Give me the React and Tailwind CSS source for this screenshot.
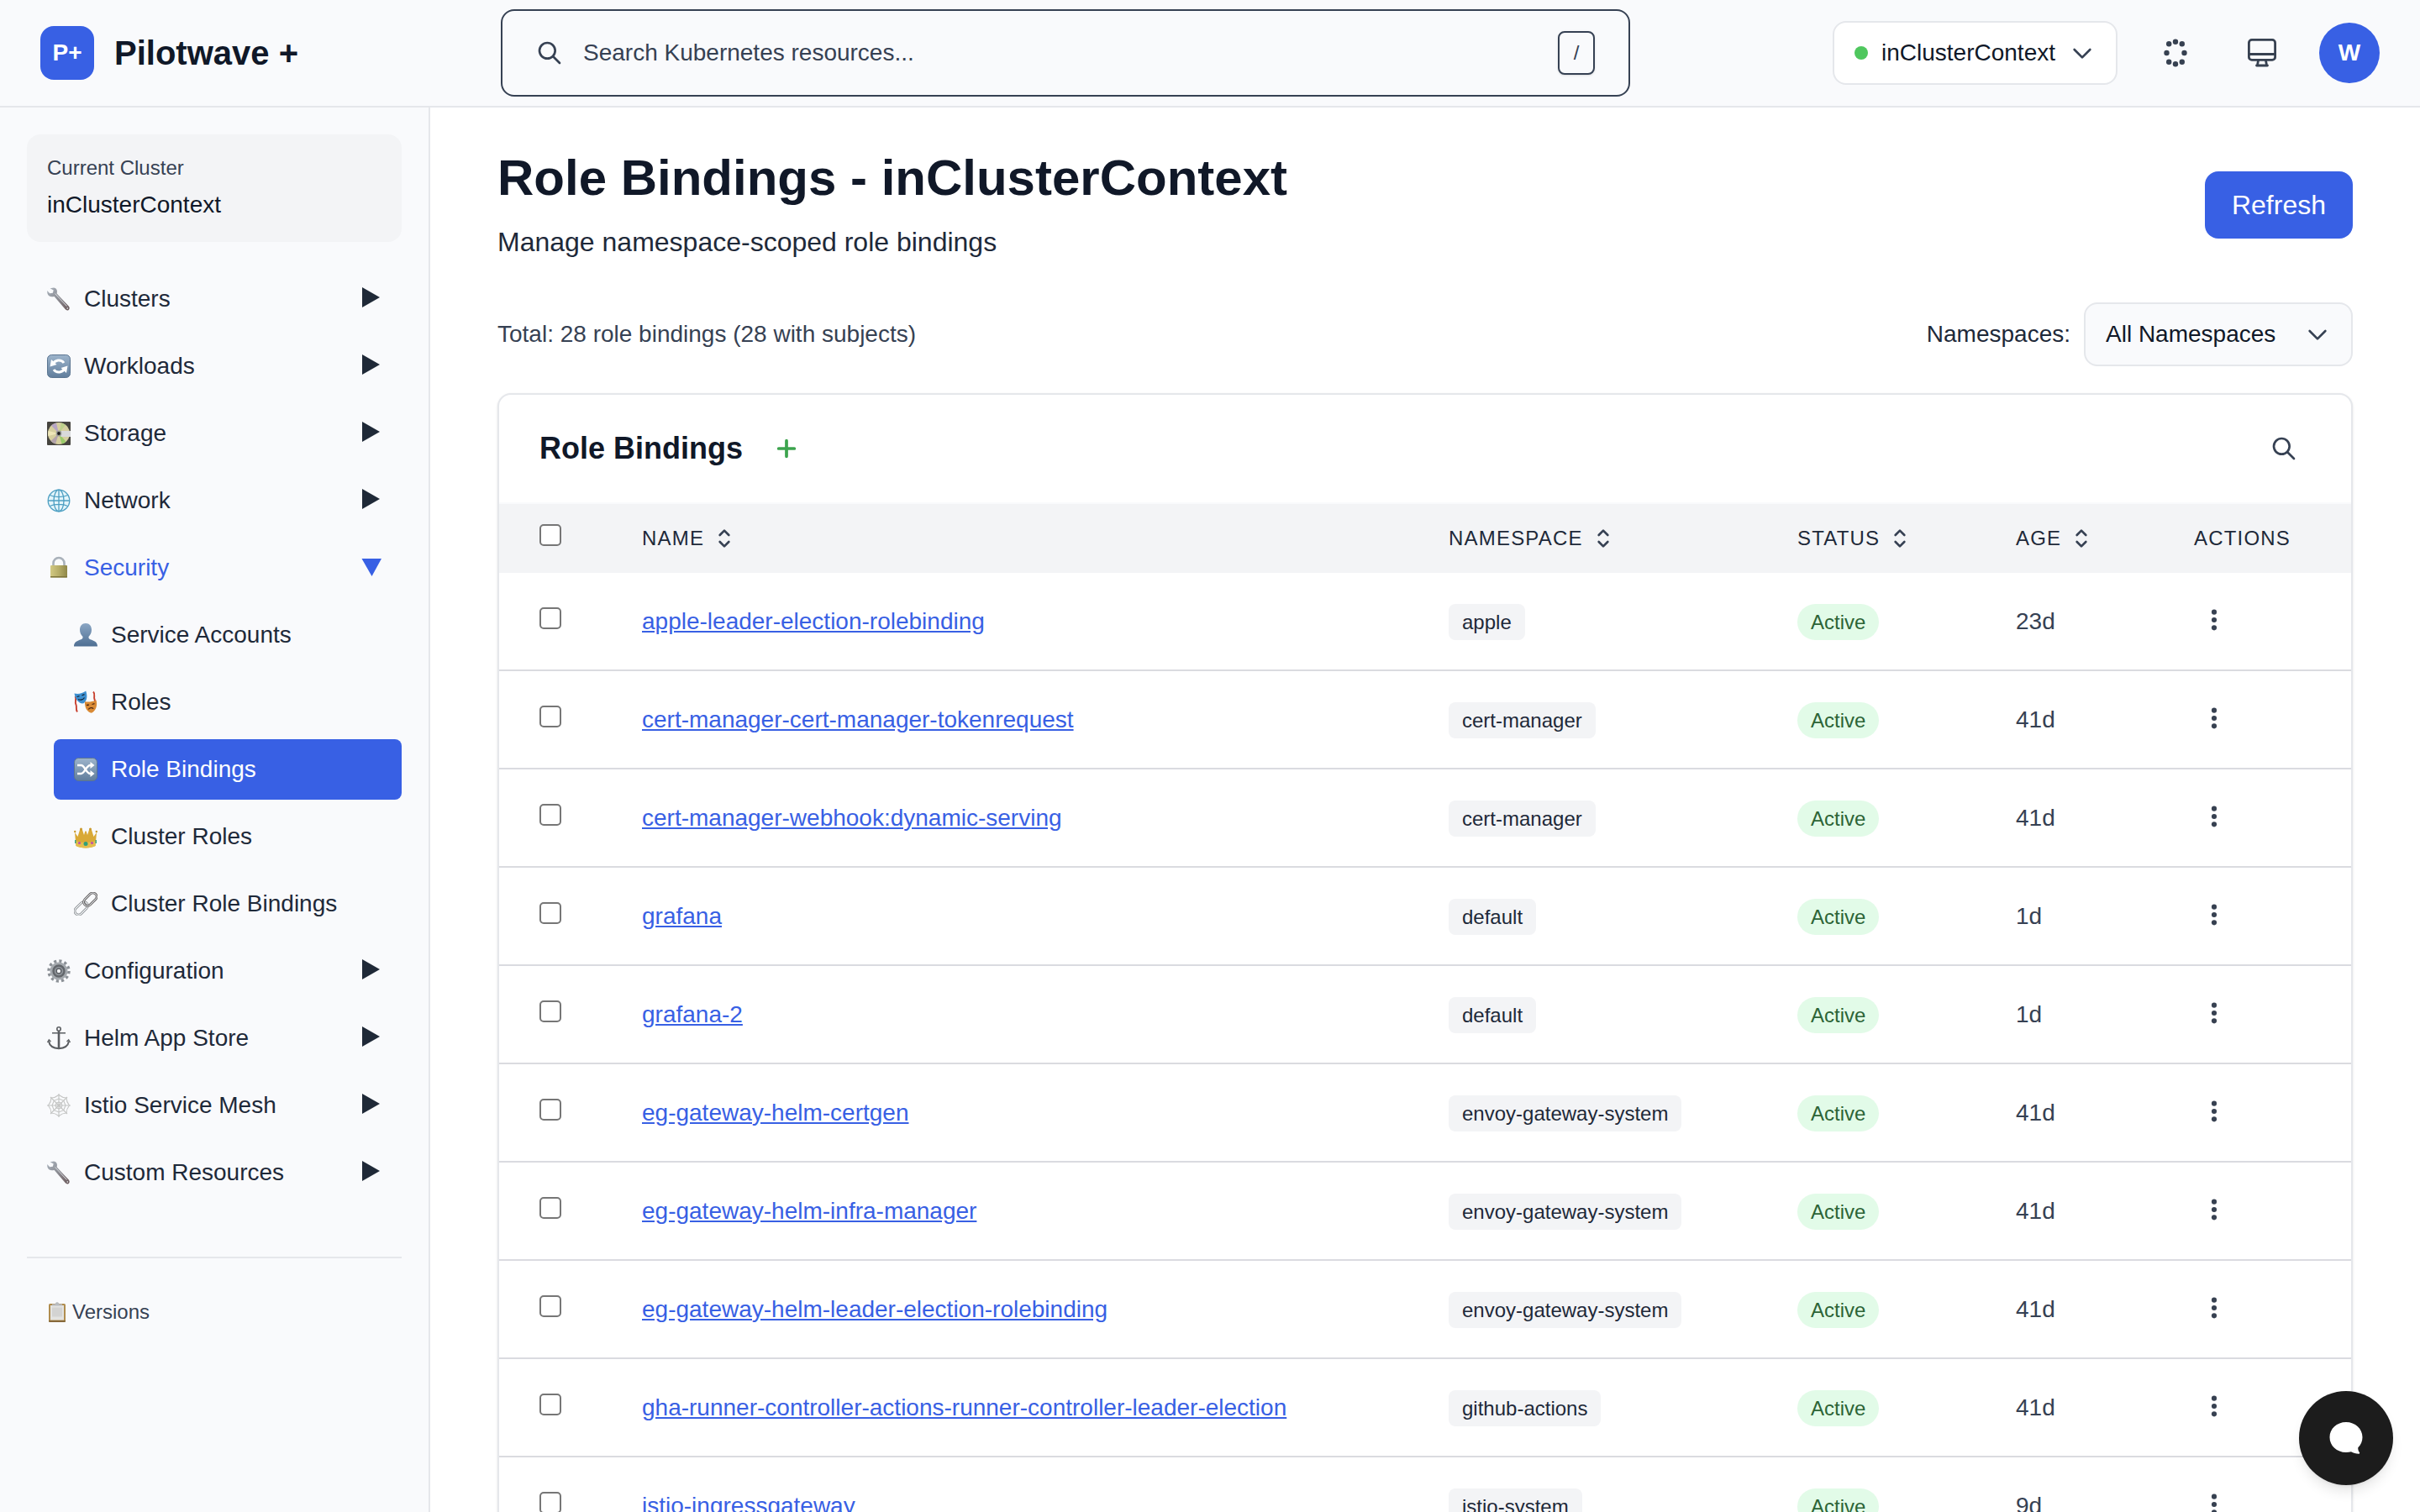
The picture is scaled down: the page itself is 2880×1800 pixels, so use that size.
import React from "react";

const WrenchIcon = () => (
  <svg viewBox="0 0 28 28" className="size-7" aria-hidden="true">
    <defs>
      <linearGradient id="steel" x1="0" y1="0" x2="1" y2="1">
        <stop offset="0" stopColor="#aab3bd" />
        <stop offset="0.45" stopColor="#8d8f96" />
        <stop offset="1" stopColor="#6e5a5c" />
      </linearGradient>
    </defs>
    <path
      d="M3.6 1.2 8 .6c2.6.2 4.4 2.600 3.900 5.200l-.3 1.800 14.200 14.900c1.300 1.400 1.200 3.400-.1 4.400-1.200.9-2.900.7-3.900-.6L8.600 10.900l-1.900.3C3.900 11.600 1.100 10 .4 7.200L.1 4l3.100 3.300 3.600-.6.9-3.100z"
      fill="url(#steel)"
    />
    <path d="m9.500 7.500 14 15" stroke="#d9dde1" strokeWidth="1" />
    <circle cx="24.200" cy="25" r="1.300" fill="#f3f4f6" stroke="#54484a" strokeWidth=".8" />
  </svg>
);

const TileDefs = () => (
  <defs>
    <linearGradient id="tile" x1="0" y1="0" x2="0" y2="1">
      <stop offset="0" stopColor="#9db4cb" />
      <stop offset="1" stopColor="#607d9c" />
    </linearGradient>
  </defs>
);

const CycleIcon = () => (
  <svg viewBox="0 0 28 28" className="size-7" aria-hidden="true">
    <TileDefs />
    <rect x=".5" y=".5" width="27" height="27" rx="5" fill="url(#tile)" stroke="#5b7591" />
    <g fill="none" stroke="#fff" strokeWidth="3">
      <path d="M7 11.500c2-5 9.500-6.500 13-1.500" />
      <path d="M21 16.500c-2 5-9.500 6.500-13 1.500" />
    </g>
    <path d="m3.500 14.500 1.500-8.500 6.500 6zM24.500 13.500 23 22l-6.500-6z" fill="#fff" />
  </svg>
);

const DiscIcon = () => (
  <svg viewBox="0 0 28 28" className="size-7" aria-hidden="true">
    <rect width="28" height="28" rx="1" fill="#46443f" />
    <circle cx="14" cy="14" r="13" fill="#d6cf9f" />
    <path d="M14 14 5 4.600A13 13 0 0 1 11 1.400z" fill="#b7a5c4" />
    <path d="m14 14 3-12.600a13 13 0 0 1 5 2.500z" fill="#bcd08a" />
    <path d="m14 14 8.500 9.800a13 13 0 0 1-5 2.700z" fill="#9acb6a" />
    <path d="M14 14 10 26.400A13 13 0 0 1 4.500 23z" fill="#b3a3ab" />
    <path d="M14 14 1.400 17A13 13 0 0 1 1.400 11z" fill="#eee6b8" />
    <path d="M17 11h11v7H17a4 4 0 0 1 0-7z" fill="#d9dadb" />
    <circle cx="14" cy="14" r="3.400" fill="#9b9c98" />
    <circle cx="14" cy="14" r="1.900" fill="#1c1c1c" />
  </svg>
);

const GlobeIcon = () => (
  <svg viewBox="0 0 28 28" className="size-7" fill="none" stroke="#4d9fc2" strokeWidth="1.300" aria-hidden="true">
    <circle cx="14" cy="14" r="12.800" fill="#e4f5fb" />
    <ellipse cx="14" cy="14" rx="6" ry="12.800" />
    <path d="M14 1v26M1 14h26M3.200 7.500c6 2.800 15.600 2.800 21.600 0M3.200 20.500c6-2.800 15.600-2.800 21.600 0" />
  </svg>
);

const LockIcon = () => (
  <svg viewBox="0 0 28 28" className="size-7" aria-hidden="true">
    <defs>
      <linearGradient id="brass" x1="0" x2="1">
        <stop offset="0" stopColor="#d2c983" />
        <stop offset=".5" stopColor="#b6ad68" />
        <stop offset="1" stopColor="#8f8748" />
      </linearGradient>
    </defs>
    <path d="M7.500 13V8.500a6.500 6.500 0 0 1 13 0V13" fill="none" stroke="#a9b1ba" strokeWidth="2.600" />
    <rect x="4" y="11" width="20" height="14.500" rx="1" fill="url(#brass)" />
    <path d="M4 24h20v1.500H4z" fill="#7d743b" />
  </svg>
);

const PersonIcon = () => (
  <svg viewBox="0 0 28 28" className="size-7" aria-hidden="true">
    <defs>
      <linearGradient id="bust" x1="0" y1="0" x2="0" y2="1">
        <stop offset="0" stopColor="#8aa6c4" />
        <stop offset="1" stopColor="#4f6f93" />
      </linearGradient>
    </defs>
    <path
      d="M14 0c4.400 0 7 3.200 7 7.800 0 3.600-1.600 6.400-3.400 8-.4 1.700.2 2.700 1.900 3.400 4.300 1.600 8.500 3 8.500 8.300H0c0-5.300 4.200-6.700 8.500-8.300 1.700-.7 2.300-1.700 1.900-3.400C8.600 14.200 7 11.400 7 7.800 7 3.200 9.600 0 14 0z"
      fill="url(#bust)"
    />
  </svg>
);

const MasksIcon = () => (
  <svg viewBox="0 0 28 28" className="size-7" fill="none" aria-hidden="true">
    <path d="M1.500 7c2 3-1 6 1 10 1.200 3-.8 5 1.500 8.500" stroke="#c8402f" strokeWidth="1.900" />
    <path d="M23 1.500c3 3 0 6 1.500 9 1 2 0 3.500 1 5" stroke="#c8402f" strokeWidth="1.900" />
    <path d="M.5 3.500C5.500 4.500 10 3.500 14.200.5c1.800 5 2 11.500-2.700 14.800C6 16.200 1.500 10.500.5 3.500z" fill="#3e8fd0" />
    <path d="m3.500 7.500 3-.9M9.500 5.800l3-1.200M5 10.500c2.500 1.500 6 .5 7.500-2" stroke="#12283d" strokeWidth="1.300" />
    <path d="M13 13.200c4.500.8 8.800.2 13.500-1.700 1.500 5.500.500 12-5.500 15.300-5.500-1-8.500-7-8-13.600z" fill="#d98a35" />
    <path d="m15 17.500 3-.4M21.500 16.500l3-.9M17.200 22.500c1.500-2.200 4.300-2.500 6-.9" stroke="#4a2410" strokeWidth="1.300" />
  </svg>
);

const ShuffleIcon = () => (
  <svg viewBox="0 0 28 28" className="size-7" aria-hidden="true">
    <TileDefs />
    <rect x=".5" y=".5" width="27" height="27" rx="5" fill="url(#tile)" stroke="#5b7591" />
    <g fill="none" stroke="#fff" strokeWidth="2.400">
      <path d="M4 9h4.500c4.500 0 6 10 11 10h1.500" />
      <path d="M4 19h4.500c4.500 0 6-10 11-10h1.500" />
    </g>
    <path d="m19.500 5 5 4-5 4zM19.500 15l5 4-5 4z" fill="#fff" />
  </svg>
);

const CrownIcon = () => (
  <svg viewBox="0 0 28 28" className="size-7" aria-hidden="true">
    <path
      d="m1 9 3.500 5L7 6l1.500-1L10 6l2 6 1.300-4.500h1.400L16 12l2-6 1.500-1L21 6l2.500 8L27 9l-1.500 16c-5 3.200-18 3.200-23 0z"
      fill="#d9a936"
    />
    <path d="M2 19c6 2.500 18 2.500 24 0l-.5 6c-5 3.200-18 3.200-23 0z" fill="#e5bd4d" />
    <g fill="#c9982b">
      <circle cx="1.200" cy="8" r="1.200" />
      <circle cx="8.500" cy="5" r="1.500" />
      <circle cx="19.500" cy="5" r="1.500" />
      <circle cx="26.800" cy="8" r="1.200" />
    </g>
    <circle cx="14" cy="22.500" r="2.500" fill="#2fa07a" />
    <circle cx="6.500" cy="21.500" r="1.600" fill="#c04fa8" />
    <circle cx="21.500" cy="21.500" r="1.600" fill="#c04fa8" />
    <path d="M1.800 18v4M26.200 18v4" stroke="#3aa57f" strokeWidth="1.500" />
  </svg>
);

const LinkIcon = () => (
  <svg viewBox="0 0 28 28" className="size-7" fill="none" aria-hidden="true">
    <g transform="rotate(-45 14 14)">
      <rect x="-2.500" y="9.500" width="18" height="9" rx="4.500" stroke="#7d8085" strokeWidth="2.800" />
      <rect x="-2.500" y="9.500" width="18" height="9" rx="4.500" stroke="#eceff1" strokeWidth="1.400" />
      <rect x="12.500" y="9.500" width="18" height="9" rx="4.500" stroke="#5a5555" strokeWidth="2.800" />
      <rect x="12.500" y="9.500" width="18" height="9" rx="4.500" stroke="#d8dcdf" strokeWidth="1.200" />
    </g>
  </svg>
);

const GearIcon = () => (
  <svg viewBox="0 0 28 28" className="size-7" fill="none" aria-hidden="true">
    <circle cx="14" cy="14" r="12" stroke="#8b9096" strokeWidth="3.400" strokeDasharray="3.140 3.140" />
    <circle cx="14" cy="14" r="8.500" fill="#8f949a" stroke="#a3a8ad" strokeWidth="4" />
    <circle cx="14" cy="14" r="6.500" stroke="#62666b" strokeWidth="2.400" />
    <circle cx="14" cy="14" r="2.800" fill="#f3f4f6" stroke="#54585d" strokeWidth="1.200" />
  </svg>
);

const AnchorIcon = () => (
  <svg viewBox="0 0 28 28" className="size-7" fill="none" stroke="#5a5d61" aria-hidden="true">
    <circle cx="14" cy="3" r="2.200" strokeWidth="1.600" />
    <path d="M14 5.500V26" strokeWidth="2.600" />
    <path d="M6 7.800h16" strokeWidth="1.500" />
    <path d="M2 17.500C3 23.500 8 26 14 26.300c6-.3 11-2.800 12-8.800" strokeWidth="1.900" />
    <path d="m.5 19 1.800-3.200L4.500 18M27.500 19l-1.800-3.200-2.200 2.200" strokeWidth="1.400" />
  </svg>
);

const WebIcon = () => (
  <svg viewBox="0 0 28 28" className="size-7" fill="none" stroke="#c4c5c4" strokeWidth="1.100" aria-hidden="true">
    <path d="M14 0v28M0 14h28M4 4l20 20M24 4 4 24" />
    <path d="M14 1.500Q18.500 5 23 5q0 4.500 3.500 9-3.500 4.500-3.500 9-4.500 0-9 3.500Q9.500 23 5 23q0-4.500-3.500-9Q5 9.500 5 5q4.500 0 9-3.500z" />
    <path d="m14 6 5.700 2.300L22 14l-2.300 5.700L14 22l-5.700-2.300L6 14l2.300-5.700z" />
    <path d="m14 10 2.800 1.200L18 14l-1.200 2.800L14 18l-2.800-1.200L10 14l1.200-2.800z" />
  </svg>
);

const ClipboardIcon = () => (
  <svg viewBox="0 0 24 24" className="size-6" aria-hidden="true">
    <rect x="2" y="2" width="20" height="22" rx="1.500" fill="#b08d4f" />
    <rect x="4" y="4" width="16" height="17.500" fill="#e3e3e1" />
    <rect x="6" y="6.500" width="12" height="11" fill="#d3d3d2" />
    <path d="M6 4.500V2.500h3.500C10 .8 11 .3 12 .3s2 .5 2.500 2.200H18v2z" fill="#b9bcc0" />
    <path d="M2 22h20v.5a1.500 1.500 0 0 1-1.500 1.500h-17A1.500 1.500 0 0 1 2 22.500z" fill="#86683a" />
  </svg>
);

const Stroke = ({ d, className = "text-gray-700", weight = 2 }) => (
  <svg
    viewBox="0 0 24 24"
    className={`size-8 shrink-0 ${className}`}
    fill="none"
    stroke="currentColor"
    strokeWidth={weight}
    strokeLinecap="round"
    strokeLinejoin="round"
    aria-hidden="true"
  >
    <path d={d} />
  </svg>
);

const SEARCH = "M21 21l-6-6m2-5a7 7 0 11-14 0 7 7 0 0114 0z";
const CHEVRON = "M19 9l-7 7-7-7";
const SORT = "M8 9l4-4 4 4m0 6l-4 4-4-4";

const SyncDots = () => (
  <svg viewBox="0 0 36 36" className="size-9" fill="#374151" aria-hidden="true">
    <circle cx="19" cy="4.700" r="3.200" />
    <circle cx="11.200" cy="7.300" r="3.200" />
    <circle cx="26.800" cy="7.300" r="3.200" />
    <circle cx="8.500" cy="18" r="3.200" />
    <circle cx="29.500" cy="18" r="3.200" />
    <circle cx="11.200" cy="28.700" r="3.200" />
    <circle cx="26.800" cy="28.700" r="3.200" />
    <circle cx="19" cy="31.300" r="3.200" />
  </svg>
);

const Monitor = () => (
  <svg viewBox="0 0 36 36" className="size-9" fill="none" stroke="#374151" strokeWidth="2.800" strokeLinecap="round" strokeLinejoin="round" aria-hidden="true">
    <rect x="2.400" y="2.400" width="31.200" height="24" rx="3.500" />
    <path d="M3 19.500h30M13.500 27l-1 5.500M22.500 27l1 5.500M11.500 33h13" />
  </svg>
);

const Kebab = () => (
  <svg viewBox="0 0 24 24" className="size-8" fill="#374151" aria-hidden="true">
    <circle cx="12" cy="5" r="2.300" />
    <circle cx="12" cy="12" r="2.300" />
    <circle cx="12" cy="19" r="2.300" />
  </svg>
);

const Arrow = ({ open }) =>
  open ? (
    <svg viewBox="0 0 24 24" className="size-6" fill="#3860e4" aria-hidden="true">
      <path d="M.5 1H24L12.500 22z" />
    </svg>
  ) : (
    <svg viewBox="0 0 24 24" className="mb-1 size-6" fill="#1f2937" aria-hidden="true">
      <path d="M1 0v24l21-12z" />
    </svg>
  );

const NAV = [
  { label: "Clusters", Icon: WrenchIcon },
  { label: "Workloads", Icon: CycleIcon },
  { label: "Storage", Icon: DiscIcon },
  { label: "Network", Icon: GlobeIcon },
  {
    label: "Security",
    Icon: LockIcon,
    children: [
      { label: "Service Accounts", Icon: PersonIcon },
      { label: "Roles", Icon: MasksIcon },
      { label: "Role Bindings", Icon: ShuffleIcon, active: true },
      { label: "Cluster Roles", Icon: CrownIcon },
      { label: "Cluster Role Bindings", Icon: LinkIcon },
    ],
  },
  { label: "Configuration", Icon: GearIcon },
  { label: "Helm App Store", Icon: AnchorIcon },
  { label: "Istio Service Mesh", Icon: WebIcon },
  { label: "Custom Resources", Icon: WrenchIcon },
];

const ROWS = [
  ["apple-leader-election-rolebinding", "apple", "23d"],
  ["cert-manager-cert-manager-tokenrequest", "cert-manager", "41d"],
  ["cert-manager-webhook:dynamic-serving", "cert-manager", "41d"],
  ["grafana", "default", "1d"],
  ["grafana-2", "default", "1d"],
  ["eg-gateway-helm-certgen", "envoy-gateway-system", "41d"],
  ["eg-gateway-helm-infra-manager", "envoy-gateway-system", "41d"],
  ["eg-gateway-helm-leader-election-rolebinding", "envoy-gateway-system", "41d"],
  ["gha-runner-controller-actions-runner-controller-leader-election", "github-actions", "41d"],
  ["istio-ingressgateway", "istio-system", "9d"],
];

const Header = () => (
  <header className="flex shrink-0 items-center justify-between border-b-2 border-gray-200 bg-[#f9fafc] px-12 py-[11px]">
    <div className="flex items-center gap-6">
      <div className="flex size-16 items-center justify-center rounded-2xl bg-[#3860e4] text-[28px] font-bold text-white">P+</div>
      <span className="text-[40px] leading-[48px] font-bold text-gray-900">Pilotwave +</span>
    </div>
    <label className="flex h-[104px] w-full max-w-[1344px] items-center gap-6 rounded-2xl border-2 border-gray-700 px-10">
      <Stroke d={SEARCH} />
      <input
        type="text"
        aria-label="Search"
        placeholder="Search Kubernetes resources..."
        className="min-w-0 flex-1 bg-transparent text-[28px] leading-10 outline-none placeholder:text-gray-700"
      />
      <kbd className="flex h-[52px] w-11 items-center justify-center rounded-lg border-2 border-gray-700 bg-[#f9fafc] font-['Liberation_Sans',Arial,sans-serif] text-2xl text-gray-700 shadow-sm">
        /
      </kbd>
    </label>
    <div className="flex items-center gap-8">
      <button type="button" className="flex h-[76px] items-center gap-4 rounded-2xl border-2 border-gray-200 bg-white px-6 text-[28px] text-gray-900">
        <span className="size-4 rounded-full bg-[#4fc75e]" />
        inClusterContext
        <Stroke d={CHEVRON} />
      </button>
      <button type="button" aria-label="Sync" className="flex size-[72px] items-center justify-center">
        <SyncDots />
      </button>
      <button type="button" aria-label="Display" className="flex size-[72px] items-center justify-center">
        <Monitor />
      </button>
      <button type="button" aria-label="Account" className="flex size-[72px] items-center justify-center rounded-full bg-[#3860e4] text-[28px] font-bold text-white">
        W
      </button>
    </div>
  </header>
);

const Sidebar = () => (
  <aside className="flex w-[512px] shrink-0 flex-col border-r-2 border-gray-200 bg-[#f9fafc] p-8">
    <div className="rounded-2xl bg-gray-100 p-6">
      <p className="text-2xl leading-8 text-gray-700">Current Cluster</p>
      <p className="mt-2 text-[28px] leading-10 text-gray-900">inClusterContext</p>
    </div>
    <nav className="mt-8 flex flex-col gap-2 text-[28px] leading-10">
      {NAV.map(({ label, Icon, children }) => (
        <React.Fragment key={label}>
          <button
            type="button"
            aria-expanded={Boolean(children)}
            className={`flex items-center gap-4 rounded-lg px-6 py-4 text-left ${children ? "text-[#3860e4]" : "text-gray-800"}`}
          >
            <Icon />
            <span className="flex-1">{label}</span>
            <Arrow open={Boolean(children)} />
          </button>
          {children && (
            <div className="flex flex-col gap-2 pl-8">
              {children.map(({ label: sub, Icon: SubIcon, active }) => (
                <a
                  key={sub}
                  href="#"
                  className={`flex items-center gap-4 rounded-lg px-6 py-4 ${active ? "bg-[#3860e4] text-white" : "text-gray-800"}`}
                >
                  <SubIcon />
                  {sub}
                </a>
              ))}
            </div>
          )}
        </React.Fragment>
      ))}
    </nav>
    <div className="mt-16 border-t-2 border-gray-200 pt-12">
      <a href="#" className="flex items-center gap-1.5 px-6 text-2xl leading-8 text-gray-700">
        <ClipboardIcon />
        Versions
      </a>
    </div>
  </aside>
);

const Check = ({ label }) => (
  <input
    type="checkbox"
    aria-label={label}
    className="block size-[26px] appearance-none rounded-[5px] border-2 border-[#767676] bg-white checked:bg-[#3860e4]"
  />
);

const SortHead = ({ children, className = "" }) => (
  <th scope="col" className={`px-12 text-left font-normal ${className}`}>
    <button type="button" className="flex items-center gap-2 tracking-wider uppercase">
      {children}
      <Stroke d={SORT} />
    </button>
  </th>
);

const Cell = ({ children, className = "" }) => (
  <td className={`border-b-2 border-[#dadbe0] pl-12 ${className}`}>{children}</td>
);

export default function App() {
  return (
    <div className="flex h-screen flex-col overflow-hidden bg-white font-['Liberation_Sans',Arial,sans-serif]">
      <Header />
      <div className="flex min-h-0 flex-1">
        <Sidebar />
        <main className="min-w-0 flex-1 overflow-hidden px-20 py-12">
          <div className="flex items-center justify-between">
            <div>
              <h1 className="text-6xl leading-[72px] font-bold text-gray-900">Role Bindings - inClusterContext</h1>
              <p className="mt-4 text-[32px] leading-[48px] text-gray-800">Manage namespace-scoped role bindings</p>
            </div>
            <button type="button" className="rounded-2xl bg-[#3860e4] px-8 py-4 text-[32px] leading-[48px] text-white">
              Refresh
            </button>
          </div>

          <div className="mt-12 flex items-center justify-between text-[28px] leading-10">
            <p className="text-gray-700">Total: 28 role bindings (28 with subjects)</p>
            <div className="flex items-center gap-4">
              <label htmlFor="namespace" className="text-gray-800">
                Namespaces:
              </label>
              <div className="grid w-80 items-center">
                <select
                  id="namespace"
                  className="col-start-1 row-start-1 h-[76px] w-full appearance-none rounded-2xl border-2 border-gray-200 bg-[#f9fafc] px-6 text-gray-900"
                >
                  <option>All Namespaces</option>
                </select>
                <div className="pointer-events-none col-start-1 row-start-1 justify-self-end pr-[26px]">
                  <Stroke d={CHEVRON} />
                </div>
              </div>
            </div>
          </div>

          <section className="mt-8 overflow-hidden rounded-2xl border-2 border-gray-200 bg-white shadow-sm">
            <div className="flex h-[130px] items-center justify-between border-b-2 border-[#f9fafc] px-12">
              <div className="flex items-center gap-5">
                <h2 className="text-4xl leading-[56px] font-bold text-gray-900">Role Bindings</h2>
                <button type="button" aria-label="Add role binding" className="p-4">
                  <Stroke d="M12 5v14m7-7H5" weight={2.8} className="text-[#3ca44e]" />
                </button>
              </div>
              <button type="button" aria-label="Search role bindings" className="p-4">
                <Stroke d={SEARCH} />
              </button>
            </div>
            <table className="w-full table-fixed border-separate border-spacing-0">
              <thead className="bg-gray-100 text-2xl leading-8 text-gray-800">
                <tr className="h-[82px]">
                  <th scope="col" className="w-[122px] pb-2 pl-12">
                    <Check label="Select all" />
                  </th>
                  <SortHead>Name</SortHead>
                  <SortHead className="w-[415px]">Namespace</SortHead>
                  <SortHead className="w-[260px]">Status</SortHead>
                  <SortHead className="w-[212px]">Age</SortHead>
                  <th scope="col" className="w-[235px] pl-12 text-left font-normal tracking-wider uppercase">
                    Actions
                  </th>
                </tr>
              </thead>
              <tbody>
                {ROWS.map(([name, ns, age]) => (
                  <tr key={name} className="h-[117px] text-[28px] leading-10 text-gray-700">
                    <Cell className="pb-2">
                      <Check label={`Select ${name}`} />
                    </Cell>
                    <Cell className="whitespace-nowrap">
                      <a href="#" className="text-[#3860e4] underline">
                        {name}
                      </a>
                    </Cell>
                    <Cell className="pt-0.5">
                      <span className="inline-block rounded-lg bg-gray-100 px-4 text-2xl leading-[43px] text-gray-800">{ns}</span>
                    </Cell>
                    <Cell className="pt-0.5">
                      <span className="inline-block rounded-full bg-[#e2fbe8] px-4 text-2xl leading-[43px] text-[#2c6436]">Active</span>
                    </Cell>
                    <Cell>{age}</Cell>
                    <Cell className="pb-1">
                      <button type="button" aria-label={`Actions for ${name}`} className="block px-2">
                        <Kebab />
                      </button>
                    </Cell>
                  </tr>
                ))}
              </tbody>
            </table>
          </section>
        </main>
      </div>

      <button
        type="button"
        aria-label="Open chat"
        className="fixed right-8 bottom-8 flex size-28 items-center justify-center rounded-full bg-[#1c1c1c] shadow-lg"
      >
        <svg viewBox="0 0 40 40" className="size-10" fill="#fff" aria-hidden="true">
          <path d="M20 1C9 1 .5 8.800.5 19S9 37 20 37c2.300 0 4.300-.3 6-.8 2.600 1.400 5.700 2.500 9.300 2.500.9 0 1.200-1 .6-1.700-1.300-1.600-1.800-3.600-1.600-5.700C37.600 28 39.500 23.800 39.500 19 39.500 8.800 31 1 20 1z" />
        </svg>
      </button>
    </div>
  );
}
